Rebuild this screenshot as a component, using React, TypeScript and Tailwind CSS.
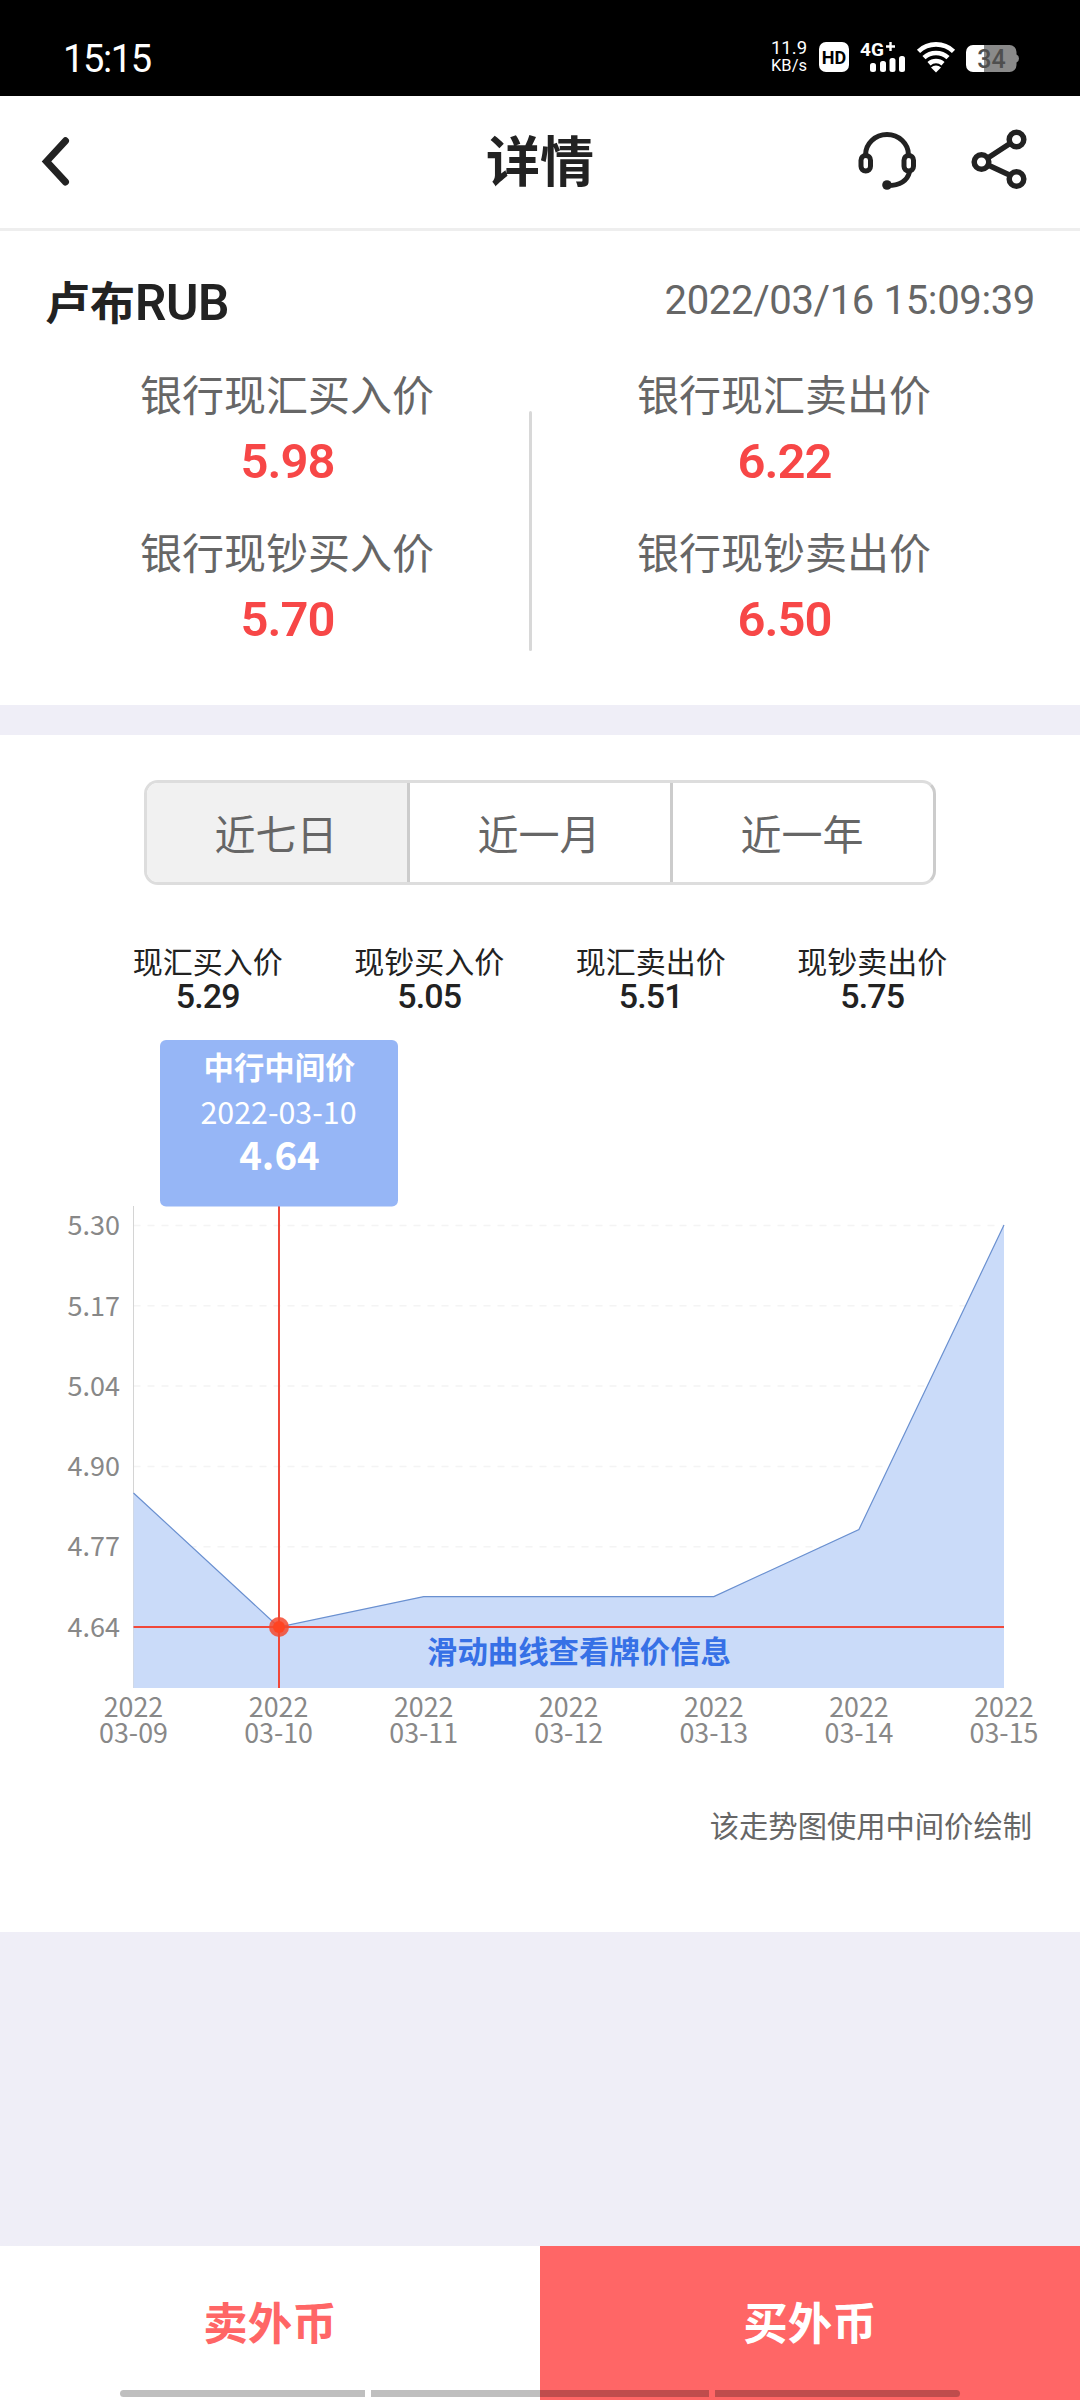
import React, { useState } from 'react';
import { clsx, type ClassValue } from 'clsx';
import { twMerge } from 'tailwind-merge';

function cn(...inputs: ClassValue[]) {
  return twMerge(clsx(inputs));
}

interface Rate {
  label: string;
  value: string;
}

const buyRates: Rate[] = [
  { label: '银行现汇买入价', value: '5.98' },
  { label: '银行现钞买入价', value: '5.70' },
];

const sellRates: Rate[] = [
  { label: '银行现汇卖出价', value: '6.22' },
  { label: '银行现钞卖出价', value: '6.50' },
];

const dayRates: Rate[] = [
  { label: '现汇买入价', value: '5.29' },
  { label: '现钞买入价', value: '5.05' },
  { label: '现汇卖出价', value: '5.51' },
  { label: '现钞卖出价', value: '5.75' },
];

const ranges = ['近七日', '近一月', '近一年'];

const history = [
  { date: '03-09', price: 4.86 },
  { date: '03-10', price: 4.64 },
  { date: '03-11', price: 4.69 },
  { date: '03-12', price: 4.69 },
  { date: '03-13', price: 4.69 },
  { date: '03-14', price: 4.8 },
  { date: '03-15', price: 5.3 },
];

const ticks = ['5.30', '5.17', '5.04', '4.90', '4.77', '4.64'];

const LEFT = 133.5;
const RIGHT = 1004;
const TOP = 192;
const BASE = 674;

const xAt = (i: number) => LEFT + (i * (RIGHT - LEFT)) / (history.length - 1);
const yAt = (price: number) => 211 + ((5.3 - price) / 0.66) * 402;

const StatusBar: React.FC = () => (
  <div className="flex h-24 items-center justify-between bg-black pt-[18px] pr-[59px] pl-[63px] font-['Roboto',sans-serif] text-white">
    <span className="mt-1 text-[38px] leading-none tracking-[-1.4px]">15:15</span>
    <div className="flex items-center">
      <div className="mr-3 flex w-[36px] flex-col items-center text-[18.5px] leading-[17px] whitespace-nowrap">
        <span>11.9</span>
        <span className="text-[16.5px]">KB/s</span>
      </div>
      <svg width="202" height="32" viewBox="0 0 202 32" className="overflow-visible">
        <rect x="0" y="1" width="30" height="30" rx="7" fill="#fff" />
        <text x="15" y="22.500" textAnchor="middle" fontSize="18" fontWeight="700" fill="#000">HD</text>
        <text x="41" y="15" fontSize="19" fontWeight="700" fill="#fff">4G</text>
        <path d="M71.500 1v9M67 5.500h9" stroke="#fff" strokeWidth="2.400" />
        <rect x="51" y="22" width="6" height="9" rx="2.500" fill="#fff" />
        <rect x="61" y="20" width="6" height="11" rx="2.500" fill="#fff" />
        <rect x="70.500" y="17" width="6" height="14" rx="2.500" fill="#fff" />
        <rect x="80" y="15" width="6" height="16" rx="2.500" fill="#fff" />
        <g fill="none" stroke="#fff" strokeWidth="4.600">
          <path d="M99.500 10.300a25.500 25.500 0 0 1 35 0" />
          <path d="M105 16.700a17.500 17.500 0 0 1 24 0" />
          <path d="M110 22.700a10.500 10.500 0 0 1 14 0" />
        </g>
        <path d="M117 31.500l-5-5a7.400 7.400 0 0 1 10 0z" fill="#fff" />
        <path d="M154 4h11v27h-11a7 7 0 0 1-7-7v-13a7 7 0 0 1 7-7z" fill="#fff" />
        <path d="M165 4h25.500a7 7 0 0 1 7 7v2.500q2.500 1 2.500 4t-2.500 4v2.500a7 7 0 0 1-7 7h-25.500z" fill="#8a8a8a" />
        <text x="172.500" y="26.500" textAnchor="middle" fontSize="25" fontWeight="500" fill="#4f4f4f">34</text>
      </svg>
    </div>
  </div>
);

const Header: React.FC = () => (
  <header className="grid h-[135px] grid-cols-3 items-center border-b-[3px] border-[#eeeeee] bg-white px-10">
    <button className="justify-self-start">
      <svg width="30" height="52" viewBox="0 0 30 52" fill="none" stroke="#222" strokeWidth="7" strokeLinecap="round" strokeLinejoin="miter">
        <path d="M25.500 4.800L6.500 25.500l19 20.500" />
      </svg>
    </button>
    <h1 className="-mt-1.5 text-center text-[54px] leading-[60px] font-bold">详情</h1>
    <div className="flex items-center gap-[53px] justify-self-end pr-[13px]">
      <svg width="60" height="60" viewBox="0 3 60 60" fill="none" stroke="#222" strokeWidth="5" className="overflow-visible">
        <path d="M8.500 26a21.500 20.500 0 0 1 43 0M52.500 43c-2.500 10-11 13.500-22 13.500" />
        <rect x="4" y="26.500" width="9.500" height="15.500" rx="4.750" />
        <rect x="47" y="26.500" width="9.500" height="15.500" rx="4.750" />
        <circle cx="30" cy="56" r="4.800" fill="#222" stroke="none" />
      </svg>
      <svg width="57" height="60" viewBox="0 3 57 60" fill="none" stroke="#222" strokeWidth="5.500" className="overflow-visible">
        <circle cx="11.500" cy="33" r="7.300" />
        <circle cx="46.500" cy="10.500" r="7.300" />
        <circle cx="46.500" cy="50" r="7.300" />
        <path d="M17.800 29L40 14.500M18.500 36.300l21.500 10" />
      </svg>
    </div>
  </header>
);

const RateColumn: React.FC<{ rates: Rate[]; className?: string }> = ({ rates, className }) => (
  <div className={cn('flex flex-col gap-[22px] text-center', className)}>
    {rates.map((rate) => (
      <div key={rate.label}>
        <div className="text-[42px] leading-[68px] text-[#666666]">{rate.label}</div>
        <div className="pt-px pl-px font-['Roboto',sans-serif] text-[49px] leading-[67px] font-semibold tracking-[-1px] text-[#f74747]">
          {rate.value}
        </div>
      </div>
    ))}
  </div>
);

const TrendChart: React.FC<{ active: number }> = ({ active }) => {
  const line = history.map((p, i) => `${xAt(i)},${yAt(p.price)}`).join(' ');
  // whole pixels keep the crosshair sharp
  const cx = Math.round(xAt(active));
  const cy = Math.round(yAt(history[active].price));

  return (
    <svg width="1080" height="756" viewBox="0 0 1080 756" className="block">
      {ticks.map((tick, i) => {
        const y = 211.5 + i * 80.3;
        return (
          <g key={tick}>
            <line x1={LEFT} x2={RIGHT} y1={y} y2={y} stroke="#f4f4f4" strokeWidth="1.500" strokeDasharray="7 7" />
            <text x="120" y={y + 9.7} textAnchor="end" fontSize="27" fill="#888888">
              {tick}
            </text>
          </g>
        );
      })}
      <line x1={LEFT} x2={LEFT} y1={TOP} y2={BASE} stroke="#d4d4d4" />
      <polygon points={`${LEFT},${BASE} ${line} ${RIGHT},${BASE}`} fill="#cadbf9" />
      <polyline points={line} fill="none" stroke="#6a90d0" strokeWidth="1.200" />
      <text x="579" y="648.500" textAnchor="middle" fontSize="30.400" fontWeight="700" fill="#3670e6">
        滑动曲线查看牌价信息
      </text>
      <g stroke="#f0483a" strokeWidth="2">
        <line x1={cx} x2={cx} y1={TOP} y2={BASE} />
        <line x1={LEFT} x2={RIGHT} y1={cy} y2={cy} />
      </g>
      <circle cx={cx} cy={cy} r="10" fill="#f4492f" fillOpacity="0.850" />
      <circle cx={cx} cy={cy} r="6" fill="#ff4422" />
      {history.map((p, i) => (
        <text key={p.date} y="702.500" textAnchor="middle" fontSize="26.800" fill="#888888">
          <tspan x={xAt(i)}>2022</tspan>
          <tspan x={xAt(i)} dy="26">{p.date}</tspan>
        </text>
      ))}
      <rect x="160" y="26" width="238" height="166.500" rx="6" fill="#96b6f6" />
      <g textAnchor="middle" fill="#fff">
        <text x="279.500" y="64.500" fontSize="30.400" fontWeight="700">中行中间价</text>
        <text x="278.500" y="109.500" fontSize="30.400">2022-{history[active].date}</text>
        <text x="279.500" y="155.500" fontSize="38.500" fontWeight="700">{history[active].price.toFixed(2)}</text>
      </g>
    </svg>
  );
};

export default function App() {
  const [range, setRange] = useState(0);

  return (
    <div className="relative flex h-[2400px] w-[1080px] flex-col overflow-hidden bg-[#efeef7] font-['Noto_Sans_CJK_SC',sans-serif] text-[#222222]">
      <StatusBar />
      <Header />

      <section className="h-[474px] bg-white pt-2">
        <div className="flex h-[120px] items-center justify-between pr-[45px] pl-[45px]">
          <div className="mt-1.5 flex items-baseline text-[45px] leading-[60px] font-bold">
            卢布<span className="font-['Roboto',sans-serif] text-[49.5px] font-semibold tracking-[-0.5px]">RUB</span>
          </div>
          <span className="mt-1 font-['Roboto',sans-serif] text-[40px] tracking-[-0.35px] text-[#666666]">2022/03/16 15:09:39</span>
        </div>
        <div className="flex pl-[45px]">
          <RateColumn rates={buyRates} className="w-[484px]" />
          <div className="mt-[52px] h-[240px] w-[3px] rounded-full bg-[#d8d8d8]" />
          <RateColumn rates={sellRates} className="w-[504px]" />
        </div>
      </section>

      <section className="mt-[30px] h-[1197px] bg-white pt-[45px]">
        <div className="mx-36 flex h-[105px] overflow-hidden rounded-[14px] border-[3px] border-[#dddddd] border-r-[#cccccc]">
          {ranges.map((name, i) => (
            <button
              key={name}
              onClick={() => setRange(i)}
              className={cn(
                'flex-1 border-l-[3px] border-[#cccccc] pr-0.5 pb-0.5 text-[41px] leading-[60px] text-[#666666] first:border-l-0',
                range === i && 'bg-[#f1f1f1]'
              )}
            >
              {name}
            </button>
          ))}
        </div>

        <div className="mx-[97px] mt-[57px] grid grid-cols-4 text-center">
          {dayRates.map((rate) => (
            <div key={rate.label}>
              <div className="text-[30px] leading-9">{rate.label}</div>
              <div className="font-['Roboto',sans-serif] text-[34px] leading-9 font-medium tracking-[-0.8px]">
                {rate.value}
              </div>
            </div>
          ))}
        </div>

        <TrendChart active={1} />

        <p className="pr-12 text-right text-[29.3px] leading-[108px] text-[#666666]">该走势图使用中间价绘制</p>
      </section>

      <footer className="mt-auto grid h-[154px] grid-cols-2 text-[44.5px] font-bold">
        <button className="bg-white pb-1 text-[#ff6666]">卖外币</button>
        <button className="bg-[#ff6666] pb-1 text-white">买外币</button>
      </footer>

      {/* system gesture bar */}
      <div className="absolute inset-x-[120px] bottom-[3px] flex h-[7px] gap-1.5">
        <div className="w-[245px] rounded-l-full bg-black/25" />
        <div className="flex-1 bg-black/25" />
        <div className="w-[245px] rounded-r-full bg-black/25" />
      </div>
    </div>
  );
}
